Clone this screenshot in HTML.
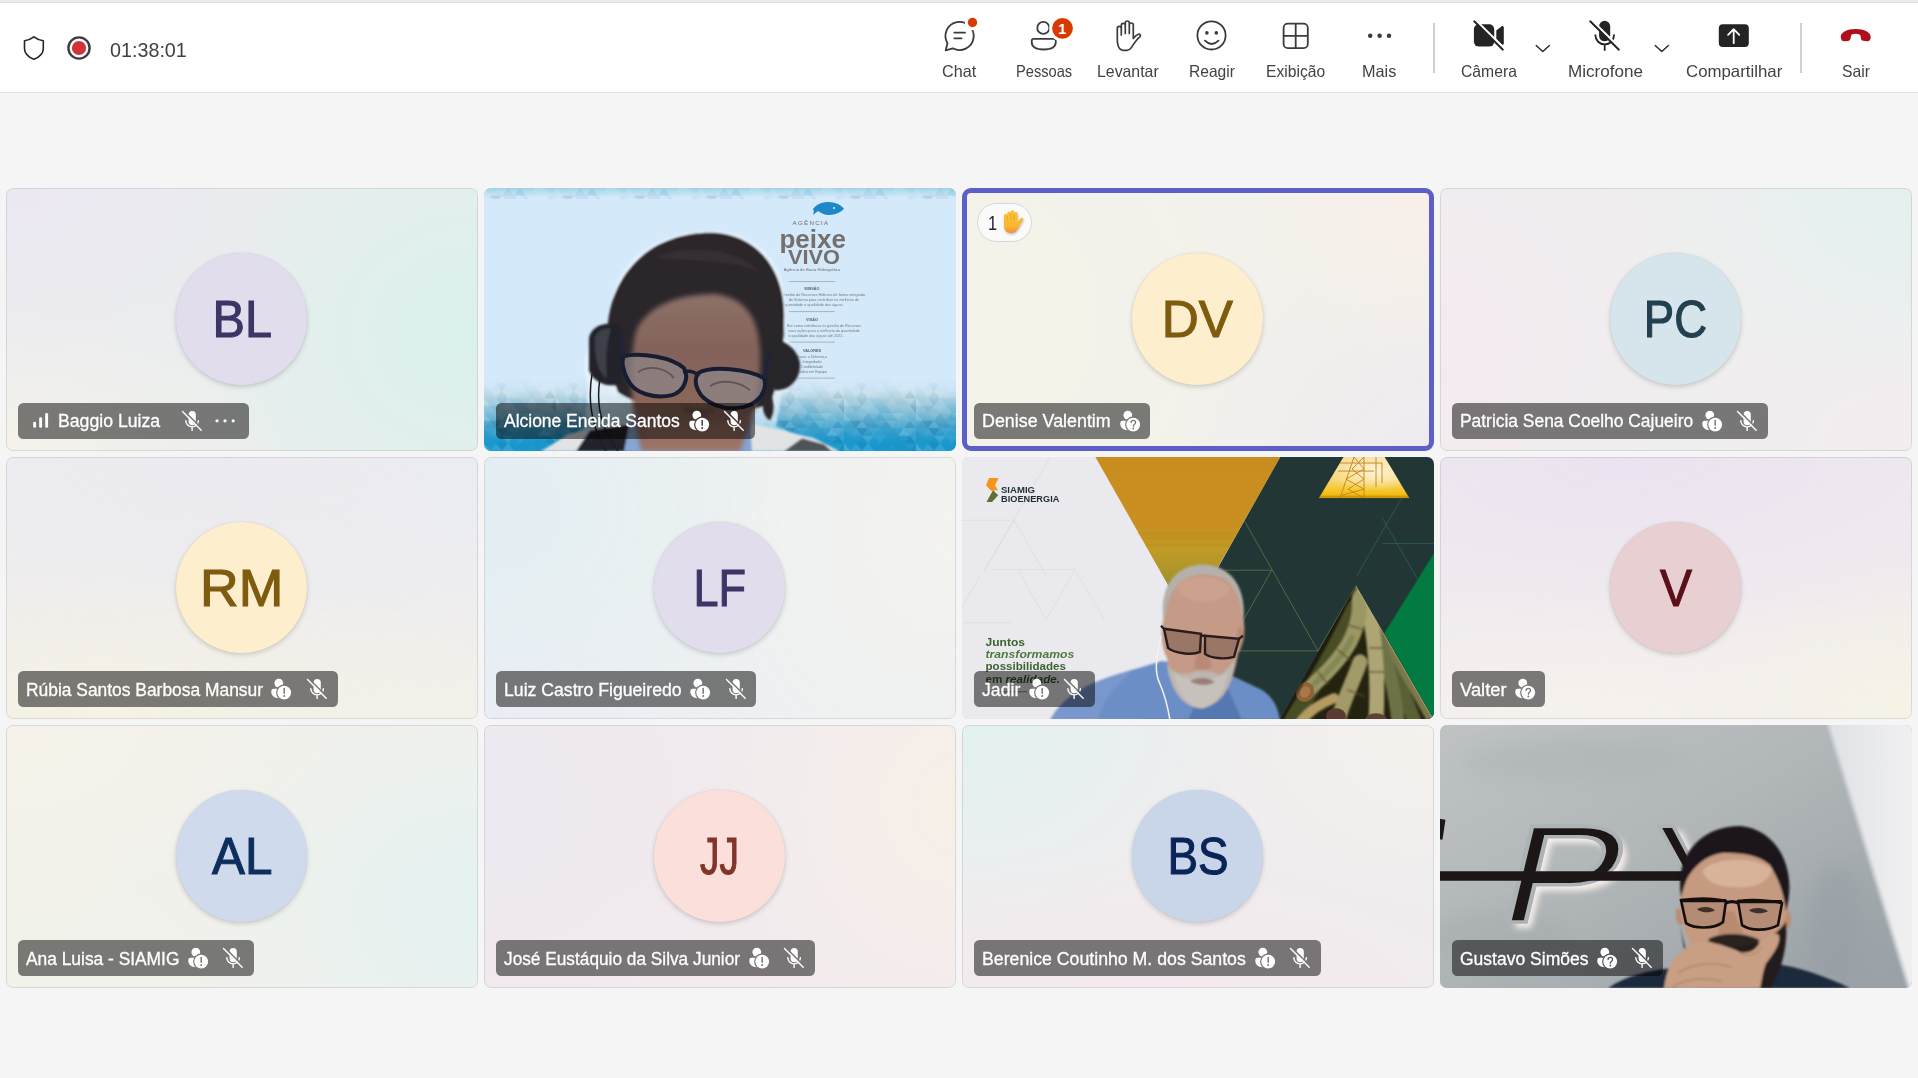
<!DOCTYPE html>
<html lang="pt-BR"><head><meta charset="utf-8"><title>Reunião</title>
<style>
*{box-sizing:border-box;margin:0;padding:0}
html,body{width:1918px;height:1078px;overflow:hidden;background:#f5f5f5;font-family:"Liberation Sans","DejaVu Sans",sans-serif}
body{position:relative}
.sx{position:absolute;white-space:nowrap;transform-origin:0 50%;display:block;line-height:1}
#strip{position:absolute;left:0;top:0;width:1918px;height:3px;background:#ebebeb;border-bottom:1px solid #dedede}
#bar{position:absolute;left:0;top:3px;width:1918px;height:90px;background:#fff;border-bottom:1px solid #e0e0e0}
#bar .lb{color:#424242;top:61.5px}
#bar svg{position:absolute;overflow:visible}
.dv{position:absolute;top:20px;height:50px;width:1.5px;background:#d1d1d1}
.tile{position:absolute;width:472px;border-radius:7px;overflow:hidden}
.tile .bd{position:absolute;left:0;top:0;right:0;bottom:0;border-radius:7px;border:1px solid rgba(120,120,130,.2);pointer-events:none}
.pic{position:absolute;left:0;top:0;display:block}
.av{position:absolute;left:50%;top:50%;width:131.4px;height:131.4px;margin:-66.2px 0 0 -66px;border-radius:50%;box-shadow:0 2px 5px rgba(0,0,0,.16),0 0 1px rgba(0,0,0,.12);text-align:center;line-height:133.2px;font-size:51px;letter-spacing:0px;-webkit-text-stroke:1.1px currentColor}
.np{position:absolute;height:36px;border-radius:5.5px;background:rgba(0,0,0,.5);color:#fff}
.np .sx{color:#fff;-webkit-text-stroke:.3px #fff}
.np svg{position:absolute;overflow:visible}

</style></head>
<body>
<div id="strip"></div><div id="bar"></div><svg style="position:absolute;left:0;top:0" width="1918" height="96" viewBox="0 0 1918 96"><path d="M33.9 36.9C31 39.1 27.6 40.4 24.5 40.8V48.4C24.5 53.4 28.4 57 33.9 59.3C39.4 57 43.3 53.4 43.3 48.4V40.8C40.2 40.4 36.8 39.1 33.9 36.9Z" fill="none" stroke="#242424" stroke-width="1.6" stroke-linejoin="round"/><circle cx="79" cy="48" r="10.6" fill="none" stroke="#3d3d3d" stroke-width="2.4"/><circle cx="79" cy="48" r="7.1" fill="#d13438"/><path d="M952.8 48.3L945.7 50.3L947.5 43.2A14.1 14.1 0 1 1 952.8 48.3Z" fill="none" stroke="#3b3b3b" stroke-width="1.8" stroke-linejoin="round"/><path d="M954.3 32.7H965M954.3 38.3H961.6" stroke="#3b3b3b" stroke-width="1.8" stroke-linecap="round"/><circle cx="972.5" cy="22.5" r="7.7" fill="#fff"/><circle cx="972.5" cy="22.5" r="4.7" fill="#d83b01"/><circle cx="1043.3" cy="27.9" r="6" fill="none" stroke="#3b3b3b" stroke-width="1.8"/><path d="M1034 38.8H1053.5A2.3 2.3 0 0 1 1055.8 41.1V42C1055.8 47 1050.8 49.5 1043.75 49.5S1031.7 47 1031.7 42V41.1A2.3 2.3 0 0 1 1034 38.8Z" fill="none" stroke="#3b3b3b" stroke-width="1.8"/><circle cx="1062.5" cy="28.3" r="13.3" fill="#fff"/><circle cx="1062.5" cy="28.3" r="10.4" fill="#d83b01"/><text x="1062.3" y="33.6" text-anchor="middle" font-family="Liberation Sans,sans-serif" font-weight="700" font-size="14.5" fill="#fff">1</text><path d="M1117.3 40V28.4a2 2 0 0 1 4 0V35M1121.3 35V25.4a2 2 0 0 1 4 0V33.5M1125.3 33.5V23a2 2 0 0 1 4 0V33.5M1129.3 33.5V25a2 2 0 0 1 4 0V38.6c1.4-2 3.4-3.8 5-4.4c1.6-.5 2.7.9 1.8 2.4c-3.8 3-6.300 7-8.8 11c-1 1.600-2.300 2.700-4.300 2.700h-3.600c-2.500 0-4.100-1.500-5.100-4C1117.700 44.500 1117.300 42.500 1117.300 40" fill="none" stroke="#3b3b3b" stroke-width="1.7" stroke-linecap="round" stroke-linejoin="round"/><circle cx="1211.5" cy="35.4" r="14.1" fill="none" stroke="#3b3b3b" stroke-width="1.8"/><circle cx="1206.9" cy="32.9" r="1.8" fill="#3b3b3b"/><circle cx="1216.3" cy="32.9" r="1.8" fill="#3b3b3b"/><path d="M1204.9 40.7Q1211.6 47.4 1218.5 40.7" fill="none" stroke="#3b3b3b" stroke-width="1.8" stroke-linecap="round"/><rect x="1283.6" y="23.6" width="24.2" height="24.5" rx="4.2" fill="none" stroke="#3b3b3b" stroke-width="1.8"/><path d="M1295.7 23.6V48.1M1283.6 35.8H1307.8" stroke="#3b3b3b" stroke-width="1.8"/><circle cx="1370.2" cy="35.7" r="2.25" fill="#3b3b3b"/><circle cx="1379.6" cy="35.7" r="2.25" fill="#3b3b3b"/><circle cx="1389" cy="35.7" r="2.25" fill="#3b3b3b"/><rect x="1473.9" y="24.3" width="20.3" height="22.3" rx="5" fill="#242424"/><path d="M1496.3 30.6V38.9L1501.6 44.4C1502.5 45.300 1503.8 44.7 1503.8 43.5V27.6C1503.8 26.3 1502.4 25.6 1501.4 26.4Z" fill="#242424"/><path d="M1475.000 19.500L1504.700 48.900" stroke="#fff" stroke-width="2.3"/><path d="M1474.200 21.300L1502.900 49.700" stroke="#242424" stroke-width="1.9" stroke-linecap="round"/><path d="M1536.2 45.600L1542.8 51.600L1549.3999999999999 45.600" fill="none" stroke="#242424" stroke-width="1.400" stroke-linecap="round" stroke-linejoin="round"/><path d="M1655.2 45.600L1661.8 51.600L1668.3999999999999 45.600" fill="none" stroke="#242424" stroke-width="1.400" stroke-linecap="round" stroke-linejoin="round"/><rect x="1599.1" y="20.8" width="11.1" height="20.5" rx="5.55" fill="#242424"/><path d="M1595.400 35.200A9.300 9.300 0 0 0 1614.000 35.200M1604.700 44.700V50" fill="none" stroke="#242424" stroke-width="1.800" stroke-linecap="round"/><path d="M1591.000 19.500L1620.700 48.900" stroke="#fff" stroke-width="2.3"/><path d="M1590.200 21.300L1618.900 49.700" stroke="#242424" stroke-width="1.9" stroke-linecap="round"/><rect x="1718.8" y="24.3" width="30" height="22.600" rx="4" fill="#242424"/><path d="M1733.700 43.200V29.400M1728.100 34.800L1733.700 29.100L1739.300 34.800" fill="none" stroke="#fff" stroke-width="1.800" stroke-linecap="round" stroke-linejoin="round"/><path d="M1855.7 29.100C1847 29.100 1840.600 32.600 1840.800 37C1840.900 39.400 1841.800 41.300 1844 41.300L1848.300 40.900C1849.600 40.800 1850.200 40 1850.500 38.600L1851.300 34.800C1854 33.400 1857.400 33.400 1860.300 34.900L1861 38.600C1861.300 40 1861.900 40.700 1863.200 40.800L1867.500 41.300C1869.700 41.300 1870.700 39.400 1870.700 37C1870.800 32.600 1864.400 29.100 1855.700 29.100Z" fill="#b10e1c"/></svg><div class="dv" style="left:1433px;top:23px"></div><div class="dv" style="left:1800px;top:23px"></div><span class="sx" style="left:110.23px;font-size:21px;font-weight:400;transform:scaleX(0.9396);top:39.2px;color:#424242">01:38:01</span><span class="sx" style="left:942.43px;font-size:16.5px;font-weight:400;transform:scaleX(0.9810);top:62.7px;color:#424242">Chat</span><span class="sx" style="left:1015.53px;font-size:16.5px;font-weight:400;transform:scaleX(0.8863);top:62.7px;color:#424242">Pessoas</span><span class="sx" style="left:1097.13px;font-size:16.5px;font-weight:400;transform:scaleX(0.9607);top:62.7px;color:#424242">Levantar</span><span class="sx" style="left:1188.73px;font-size:16.5px;font-weight:400;transform:scaleX(0.9442);top:62.7px;color:#424242">Reagir</span><span class="sx" style="left:1266.13px;font-size:16.5px;font-weight:400;transform:scaleX(0.9491);top:62.7px;color:#424242">Exibição</span><span class="sx" style="left:1362.33px;font-size:16.5px;font-weight:400;transform:scaleX(0.9843);top:62.7px;color:#424242">Mais</span><span class="sx" style="left:1460.93px;font-size:16.5px;font-weight:400;transform:scaleX(0.9525);top:62.7px;color:#424242">Câmera</span><span class="sx" style="left:1568.13px;font-size:16.5px;font-weight:400;transform:scaleX(1.0351);top:62.7px;color:#424242">Microfone</span><span class="sx" style="left:1686.13px;font-size:16.5px;font-weight:400;transform:scaleX(1.0195);top:62.7px;color:#424242">Compartilhar</span><span class="sx" style="left:1842.13px;font-size:16.5px;font-weight:400;transform:scaleX(0.9541);top:62.7px;color:#424242">Sair</span><svg width="0" height="0" style="position:absolute"><defs>
<mask id="mMic" maskUnits="userSpaceOnUse" x="-2" y="-2" width="26" height="26"><rect x="-2" y="-2" width="26" height="26" fill="#fff"/><path d="M1.7 -0.400L20.700 18.500" stroke="#000" stroke-width="1.500"/></mask>
<symbol id="micoff" viewBox="0 0 20 20" overflow="visible"><g mask="url(#mMic)"><rect x="6.600" y="0" width="7.200" height="14.200" rx="3.600" fill="#fff"/><path d="M3.800 9.600A6.300 6.300 0 0 0 16.400 9.600M10.100 15.900V19.400" fill="none" stroke="#fff" stroke-width="1.400" stroke-linecap="round"/></g><path d="M0.500 0.600L19.200 19.200" stroke="#fff" stroke-width="1.400" stroke-linecap="round"/></symbol>
<mask id="mPa" maskUnits="userSpaceOnUse" x="-2" y="-2" width="26" height="26"><rect x="-2" y="-2" width="26" height="26" fill="#fff"/><circle cx="13.200" cy="13.600" r="8.100" fill="#000"/></mask>
<mask id="mEx" maskUnits="userSpaceOnUse" x="0" y="0" width="24" height="24"><rect width="24" height="24" fill="#fff"/><path d="M13.200 9.500V14.300" stroke="#000" stroke-width="1.500" stroke-linecap="round"/><circle cx="13.200" cy="17" r="1" fill="#000"/></mask>
<mask id="mQu" maskUnits="userSpaceOnUse" x="0" y="0" width="24" height="24"><rect width="24" height="24" fill="#fff"/><path d="M11.100 11.600C11.100 10.200 12 9.400 13.300 9.400C14.600 9.400 15.500 10.200 15.500 11.400C15.500 13.200 13.300 13.300 13.300 15.300" fill="none" stroke="#000" stroke-width="1.300" stroke-linecap="round"/><circle cx="13.300" cy="17.500" r=".9" fill="#000"/></mask>
<symbol id="ppl" viewBox="0 0 22 20" overflow="visible"><g mask="url(#mPa)" fill="#fff"><circle cx="7.800" cy="4.100" r="4.400"/><path d="M2.600 9.800H13A2.300 2.300 0 0 1 15.300 12.100V12.800C15.300 17 11.900 19.200 7.800 19.200S0.300 17 0.300 12.800V12.100A2.300 2.300 0 0 1 2.600 9.800Z"/></g></symbol>
<symbol id="pplA" viewBox="0 0 22 20" overflow="visible"><use href="#ppl"/><circle cx="13.200" cy="13.600" r="6.900" fill="#fff" mask="url(#mEx)"/></symbol>
<symbol id="pplQ" viewBox="0 0 22 20" overflow="visible"><use href="#ppl"/><circle cx="13.200" cy="13.600" r="6.900" fill="#fff" mask="url(#mQu)"/></symbol>
</defs></svg><div class="tile" style="left:6px;top:188px;height:262.67px;background:radial-gradient(ellipse 75% 90% at 0% 0%, #ece8f2 0%, #ece8f200 100%),radial-gradient(ellipse 60% 70% at 0% 100%, #f5f2ea 0%, #f5f2ea00 100%),radial-gradient(ellipse 60% 90% at 100% 55%, #daf1eb 0%, #daf1eb00 100%),#e9eeee"><div class="bd"></div><div class="av" style="background:#e2dded;color:#3d3566"><span style="display:inline-block;transform:scaleX(0.9521)">BL</span></div><div class="np" style="left:12px;top:214.67px;width:231.20px"><span class="sx" style="left:39.76px;font-size:17.5px;font-weight:400;transform:scaleX(1.0090);top:10.60px">Baggio Luiza</span><svg style="left:164.00px;top:8px" width="20" height="20"><use href="#micoff"/></svg><svg style="left:0;top:0" width="231" height="36"><g fill="#fff"><rect x="15.200" y="18.700" width="2.900" height="6" rx="1.300"/><rect x="21.200" y="14.200" width="2.900" height="10.500" rx="1.300"/><rect x="27.200" y="10" width="2.900" height="14.700" rx="1.300"/><circle cx="199" cy="17.800" r="1.600"/><circle cx="207" cy="17.800" r="1.600"/><circle cx="215.200" cy="17.800" r="1.600"/></g></svg></div></div><div class="tile ph" style="left:484px;top:188px;height:262.67px;background:#ccc"><svg class="pic" width="472" height="263.200" viewBox="0 0 472 263" preserveAspectRatio="none">
<defs><pattern id="tp1" width="72" height="45.0" patternUnits="userSpaceOnUse"><path d="M-12 0.0h12l-6.0 7.5z" fill="#036" fill-opacity="0.1"/><path d="M-6.0 7.5h12l-6.0 -7.5z" fill="#fff" fill-opacity="0.18"/><path d="M0 0.0h12l-6.0 7.5z" fill="#8cf" fill-opacity="0"/><path d="M6.0 7.5h12l-6.0 -7.5z" fill="#036" fill-opacity="0"/><path d="M12 0.0h12l-6.0 7.5z" fill="#fff" fill-opacity="0.08"/><path d="M18.0 7.5h12l-6.0 -7.5z" fill="#036" fill-opacity="0.08"/><path d="M24 0.0h12l-6.0 7.5z" fill="#fff" fill-opacity="0"/><path d="M30.0 7.5h12l-6.0 -7.5z" fill="#08c" fill-opacity="0.18"/><path d="M36 0.0h12l-6.0 7.5z" fill="#036" fill-opacity="0"/><path d="M42.0 7.5h12l-6.0 -7.5z" fill="#8cf" fill-opacity="0"/><path d="M48 0.0h12l-6.0 7.5z" fill="#fff" fill-opacity="0.16"/><path d="M54.0 7.5h12l-6.0 -7.5z" fill="#fff" fill-opacity="0.08"/><path d="M60 0.0h12l-6.0 7.5z" fill="#8cf" fill-opacity="0.05"/><path d="M66.0 7.5h12l-6.0 -7.5z" fill="#8cf" fill-opacity="0"/><path d="M72 0.0h12l-6.0 7.5z" fill="#08c" fill-opacity="0.08"/><path d="M78.0 7.5h12l-6.0 -7.5z" fill="#036" fill-opacity="0"/><path d="M-6.0 7.5h12l-6.0 7.5z" fill="#8cf" fill-opacity="0"/><path d="M0.0 15.0h12l-6.0 -7.5z" fill="#036" fill-opacity="0.05"/><path d="M6.0 7.5h12l-6.0 7.5z" fill="#036" fill-opacity="0.16"/><path d="M12.0 15.0h12l-6.0 -7.5z" fill="#fff" fill-opacity="0.08"/><path d="M18.0 7.5h12l-6.0 7.5z" fill="#036" fill-opacity="0.08"/><path d="M24.0 15.0h12l-6.0 -7.5z" fill="#036" fill-opacity="0.08"/><path d="M30.0 7.5h12l-6.0 7.5z" fill="#8cf" fill-opacity="0"/><path d="M36.0 15.0h12l-6.0 -7.5z" fill="#036" fill-opacity="0.08"/><path d="M42.0 7.5h12l-6.0 7.5z" fill="#fff" fill-opacity="0.1"/><path d="M48.0 15.0h12l-6.0 -7.5z" fill="#fff" fill-opacity="0.08"/><path d="M54.0 7.5h12l-6.0 7.5z" fill="#fff" fill-opacity="0.08"/><path d="M60.0 15.0h12l-6.0 -7.5z" fill="#036" fill-opacity="0.08"/><path d="M66.0 7.5h12l-6.0 7.5z" fill="#8cf" fill-opacity="0.16"/><path d="M72.0 15.0h12l-6.0 -7.5z" fill="#036" fill-opacity="0.18"/><path d="M78.0 7.5h12l-6.0 7.5z" fill="#8cf" fill-opacity="0.16"/><path d="M84.0 15.0h12l-6.0 -7.5z" fill="#036" fill-opacity="0.18"/><path d="M-12 15.0h12l-6.0 7.5z" fill="#036" fill-opacity="0.1"/><path d="M-6.0 22.5h12l-6.0 -7.5z" fill="#036" fill-opacity="0.05"/><path d="M0 15.0h12l-6.0 7.5z" fill="#8cf" fill-opacity="0"/><path d="M6.0 22.5h12l-6.0 -7.5z" fill="#8cf" fill-opacity="0.12"/><path d="M12 15.0h12l-6.0 7.5z" fill="#036" fill-opacity="0.16"/><path d="M18.0 22.5h12l-6.0 -7.5z" fill="#08c" fill-opacity="0.04"/><path d="M24 15.0h12l-6.0 7.5z" fill="#8cf" fill-opacity="0.1"/><path d="M30.0 22.5h12l-6.0 -7.5z" fill="#fff" fill-opacity="0"/><path d="M36 15.0h12l-6.0 7.5z" fill="#08c" fill-opacity="0.08"/><path d="M42.0 22.5h12l-6.0 -7.5z" fill="#036" fill-opacity="0.05"/><path d="M48 15.0h12l-6.0 7.5z" fill="#08c" fill-opacity="0.05"/><path d="M54.0 22.5h12l-6.0 -7.5z" fill="#fff" fill-opacity="0.18"/><path d="M60 15.0h12l-6.0 7.5z" fill="#fff" fill-opacity="0.12"/><path d="M66.0 22.5h12l-6.0 -7.5z" fill="#8cf" fill-opacity="0.08"/><path d="M72 15.0h12l-6.0 7.5z" fill="#036" fill-opacity="0.1"/><path d="M78.0 22.5h12l-6.0 -7.5z" fill="#036" fill-opacity="0.04"/><path d="M-6.0 22.5h12l-6.0 7.5z" fill="#08c" fill-opacity="0.08"/><path d="M0.0 30.0h12l-6.0 -7.5z" fill="#08c" fill-opacity="0.08"/><path d="M6.0 22.5h12l-6.0 7.5z" fill="#fff" fill-opacity="0"/><path d="M12.0 30.0h12l-6.0 -7.5z" fill="#08c" fill-opacity="0.12"/><path d="M18.0 22.5h12l-6.0 7.5z" fill="#fff" fill-opacity="0.12"/><path d="M24.0 30.0h12l-6.0 -7.5z" fill="#036" fill-opacity="0"/><path d="M30.0 22.5h12l-6.0 7.5z" fill="#8cf" fill-opacity="0.12"/><path d="M36.0 30.0h12l-6.0 -7.5z" fill="#08c" fill-opacity="0.04"/><path d="M42.0 22.5h12l-6.0 7.5z" fill="#08c" fill-opacity="0.1"/><path d="M48.0 30.0h12l-6.0 -7.5z" fill="#036" fill-opacity="0.04"/><path d="M54.0 22.5h12l-6.0 7.5z" fill="#08c" fill-opacity="0"/><path d="M60.0 30.0h12l-6.0 -7.5z" fill="#036" fill-opacity="0.12"/><path d="M66.0 22.5h12l-6.0 7.5z" fill="#fff" fill-opacity="0.08"/><path d="M72.0 30.0h12l-6.0 -7.5z" fill="#fff" fill-opacity="0.18"/><path d="M78.0 22.5h12l-6.0 7.5z" fill="#036" fill-opacity="0.05"/><path d="M84.0 30.0h12l-6.0 -7.5z" fill="#036" fill-opacity="0.05"/><path d="M-12 30.0h12l-6.0 7.5z" fill="#08c" fill-opacity="0.16"/><path d="M-6.0 37.5h12l-6.0 -7.5z" fill="#fff" fill-opacity="0.18"/><path d="M0 30.0h12l-6.0 7.5z" fill="#08c" fill-opacity="0.05"/><path d="M6.0 37.5h12l-6.0 -7.5z" fill="#8cf" fill-opacity="0.18"/><path d="M12 30.0h12l-6.0 7.5z" fill="#036" fill-opacity="0.1"/><path d="M18.0 37.5h12l-6.0 -7.5z" fill="#8cf" fill-opacity="0.18"/><path d="M24 30.0h12l-6.0 7.5z" fill="#08c" fill-opacity="0.1"/><path d="M30.0 37.5h12l-6.0 -7.5z" fill="#08c" fill-opacity="0.12"/><path d="M36 30.0h12l-6.0 7.5z" fill="#036" fill-opacity="0.05"/><path d="M42.0 37.5h12l-6.0 -7.5z" fill="#036" fill-opacity="0"/><path d="M48 30.0h12l-6.0 7.5z" fill="#036" fill-opacity="0.05"/><path d="M54.0 37.5h12l-6.0 -7.5z" fill="#036" fill-opacity="0.04"/><path d="M60 30.0h12l-6.0 7.5z" fill="#08c" fill-opacity="0"/><path d="M66.0 37.5h12l-6.0 -7.5z" fill="#036" fill-opacity="0.08"/><path d="M72 30.0h12l-6.0 7.5z" fill="#036" fill-opacity="0.1"/><path d="M78.0 37.5h12l-6.0 -7.5z" fill="#036" fill-opacity="0"/><path d="M-6.0 37.5h12l-6.0 7.5z" fill="#8cf" fill-opacity="0.16"/><path d="M0.0 45.0h12l-6.0 -7.5z" fill="#8cf" fill-opacity="0.12"/><path d="M6.0 37.5h12l-6.0 7.5z" fill="#036" fill-opacity="0.08"/><path d="M12.0 45.0h12l-6.0 -7.5z" fill="#8cf" fill-opacity="0.05"/><path d="M18.0 37.5h12l-6.0 7.5z" fill="#fff" fill-opacity="0.08"/><path d="M24.0 45.0h12l-6.0 -7.5z" fill="#8cf" fill-opacity="0.18"/><path d="M30.0 37.5h12l-6.0 7.5z" fill="#08c" fill-opacity="0.16"/><path d="M36.0 45.0h12l-6.0 -7.5z" fill="#08c" fill-opacity="0.18"/><path d="M42.0 37.5h12l-6.0 7.5z" fill="#08c" fill-opacity="0"/><path d="M48.0 45.0h12l-6.0 -7.5z" fill="#08c" fill-opacity="0.04"/><path d="M54.0 37.5h12l-6.0 7.5z" fill="#036" fill-opacity="0"/><path d="M60.0 45.0h12l-6.0 -7.5z" fill="#036" fill-opacity="0"/><path d="M66.0 37.5h12l-6.0 7.5z" fill="#036" fill-opacity="0.16"/><path d="M72.0 45.0h12l-6.0 -7.5z" fill="#036" fill-opacity="0"/><path d="M78.0 37.5h12l-6.0 7.5z" fill="#fff" fill-opacity="0.08"/><path d="M84.0 45.0h12l-6.0 -7.5z" fill="#fff" fill-opacity="0"/></pattern>
<linearGradient id="p1bot" x1="0" y1="0" x2="0" y2="1"><stop offset=".12" stop-color="#cfe3ee" stop-opacity="0"/><stop offset=".27" stop-color="#c5dde8"/><stop offset=".47" stop-color="#8fc3d8"/><stop offset=".66" stop-color="#4aa7cf"/><stop offset=".86" stop-color="#1f99cc"/><stop offset="1" stop-color="#1b9ad0"/></linearGradient>
<linearGradient id="p1top" x1="0" y1="0" x2="0" y2="1"><stop offset="0" stop-color="#8fcbe0"/><stop offset=".55" stop-color="#b5dcec" stop-opacity=".7"/><stop offset="1" stop-color="#d4e9fa" stop-opacity="0"/></linearGradient>
<linearGradient id="p1face" x1="0" y1="0" x2="0" y2="1"><stop offset="0" stop-color="#8d7169"/><stop offset=".35" stop-color="#84635b"/><stop offset=".7" stop-color="#8b6659"/><stop offset="1" stop-color="#986e62"/></linearGradient>
<linearGradient id="p1fg" x1="0" y1="0" x2="0" y2="1"><stop offset="0" stop-color="#000"/><stop offset=".3" stop-color="#fff"/></linearGradient><mask id="p1fm" maskUnits="userSpaceOnUse" x="0" y="190" width="472" height="73"><rect y="190" width="472" height="73" fill="url(#p1fg)"/></mask><filter id="b1" x="-10%" y="-10%" width="120%" height="120%"><feGaussianBlur stdDeviation="1.1"/></filter>
<filter id="b2" x="-10%" y="-10%" width="120%" height="120%"><feGaussianBlur stdDeviation="2.5"/></filter>
<filter id="b05"><feGaussianBlur stdDeviation=".5"/></filter>
</defs>
<rect width="472" height="263" fill="#d4e9fa"/>
<rect width="472" height="12" fill="url(#p1top)" opacity=".8"/><rect width="472" height="11" fill="url(#tp1)" opacity=".7"/>
<rect y="186" width="472" height="77" fill="url(#p1bot)"/><rect y="190" width="472" height="73" fill="url(#tp1)" mask="url(#p1fm)"/>
<!-- logo -->
<g filter="url(#b05)">
<path d="M329 21c5-7 16-9 25-5c3 1.500 5 3.500 6 5c-3 3-9 6-15 6c-5 0-8-2-11-4l-5 4c1-3 1-5 0-6zM350 19a1 1 0 1 0 .1 0z" fill="#1e88c9"/>
<text x="327" y="36.500" font-family="Liberation Sans,sans-serif" font-size="6.200" letter-spacing="1.300" fill="#6f6c6a" text-anchor="middle">AGÊNCIA</text>
<text x="295.500" y="59.500" font-family="Liberation Sans,sans-serif" font-weight="700" font-size="25.500" fill="#74706d" textLength="66.500" lengthAdjust="spacingAndGlyphs">peixe</text>
<text x="304" y="75.500" font-family="Liberation Sans,sans-serif" font-weight="700" font-size="21" fill="#74706d" textLength="52" lengthAdjust="spacingAndGlyphs">VIVO</text>
<text x="328" y="83" font-family="Liberation Sans,sans-serif" font-size="4.200" fill="#6f6c6a" text-anchor="middle">Agência de Bacia Hidrográfica</text>
<g stroke="#8a8f94" stroke-width=".6"><path d="M305 93.500h46M305 123.500h46M305 154h46M305 190h46"/></g>
<g font-family="Liberation Sans,sans-serif" font-size="3.800" fill="#777c82" text-anchor="middle">
<text x="328" y="102" font-weight="700" fill="#5d6268">MISSÃO</text>
<text x="340" y="108">Gestão de Recursos Hídricos de forma integrada</text><text x="340" y="113">do Sistema para contribuir na melhoria de</text><text x="330" y="118">quantidade e qualidade das águas.</text>
<text x="328" y="133" font-weight="700" fill="#5d6268">VISÃO</text>
<text x="340" y="139">Ser como referência na gestão de Recursos</text><text x="340" y="144">suas ações para a melhoria da quantidade</text><text x="332" y="149">e qualidade das águas até 2021.</text>
<text x="328" y="164" font-weight="700" fill="#5d6268">VALORES</text>
<text x="328" y="170">Fazer a Diferença</text><text x="328" y="175">Integridade</text><text x="328" y="180">Credibilidade</text><text x="326" y="185">Trabalho em Equipe</text>
</g></g>
<!-- person -->
<g filter="url(#b1)">
<!-- white halo -->
<path d="M132 140C116 96 152 42 230 43C292 46 310 100 299 150C322 158 320 200 298 204L292 238L356 263H56L100 240L104 196C96 180 100 144 132 140Z" fill="#f2f8fd" opacity=".6"/>
<!-- shirt / shoulders -->
<path d="M58 263L84 246L142 234L270 236L330 250L356 263Z" fill="#e2e3e5"/>
<path d="M92 263L106 242L146 236L152 263Z" fill="#20232b"/>
<path d="M300 263L318 250L340 256L348 263Z" fill="#2a2d36" opacity=".8"/>
<path d="M140 263L146 232H266L268 263Z" fill="#86a6d4"/>
<!-- hair -->
<path d="M134 204C118 162 118 112 148 78C170 52 204 43 234 45C280 50 302 90 300 132C300 162 296 192 286 216C262 228 168 228 134 204Z" fill="#2a262c"/>
<path d="M170 70C200 56 250 58 276 84C250 72 200 72 170 70Z" fill="#3c3338" opacity=".7"/>
</g>
<g filter="url(#b2)">
<!-- face -->
<path d="M151 146C160 120 190 106 232 106C260 110 272 128 275 152C280 188 270 230 256 263H158C148 232 144 186 151 146Z" fill="url(#p1face)"/>
<path d="M158 226C190 240 236 240 266 226L256 263H160Z" fill="#9b7266" opacity=".9"/>
<path d="M196 214C206 222 222 224 232 218C226 232 204 232 196 214Z" fill="#5e4038" opacity=".6"/>
</g>
<g filter="url(#b1)">
<!-- ear cups -->
<path d="M105 150C107 138 121 133 134 137C142 146 142 184 136 196C124 200 109 194 105 182Z" fill="#24242b"/>
<path d="M281 152C296 149 313 158 316 175C317 191 306 203 291 202C283 196 279 168 281 152Z" fill="#25252c"/>
<path d="M111 150C113 142 121 139 127 141C123 152 121 170 123 190C115 186 110 170 111 150Z" fill="#4a4b55" opacity=".7"/>
<path d="M284 204C290 210 292 222 286 232C278 228 276 214 284 204Z" fill="#2a262c"/>
</g>
<!-- mic boom + cable -->
<path d="M108 186C104 210 106 236 122 263M116 190C112 215 116 240 134 263" fill="none" stroke="#1d1d24" stroke-width="1.500"/>
<!-- glasses -->
<g filter="url(#b05)">
<path d="M140 168C156 164 188 169 200 180C205 189 201 203 188 207C170 211 150 205 144 192C139 183 137 173 140 168Z" fill="#8d8284" fill-opacity=".8" stroke="#191e33" stroke-width="4"/>
<path d="M214 185C228 177 264 181 280 190C284 201 276 215 259 219C240 223 220 215 214 202C211 196 211 190 214 185Z" fill="#8d8284" fill-opacity=".8" stroke="#191e33" stroke-width="4"/>
<path d="M199 184C205 182 210 183 215 188" fill="none" stroke="#191e33" stroke-width="3.500"/>
<path d="M140 169L136 150M280 190L285 165" stroke="#1d2440" stroke-width="3"/>
<path d="M154 184C166 176 182 180 190 190M226 198C238 190 256 194 266 202" fill="none" stroke="#5a4a4c" stroke-width="1.800" opacity=".8"/>
</g>
</svg><div class="np" style="left:12px;top:214.67px;width:259.20px"><span class="sx" style="left:8.16px;font-size:17.5px;font-weight:400;transform:scaleX(0.9978);top:10.60px">Alcione Eneida Santos</span><svg style="left:192.80px;top:8px" width="22" height="20"><use href="#pplA"/></svg><svg style="left:228.30px;top:8px" width="20" height="20"><use href="#micoff"/></svg></div></div><div class="tile" style="left:962px;top:188px;height:262.67px;background:radial-gradient(ellipse 60% 110% at 0% 50%, #f5f4e9 0%, #f5f4e900 100%),radial-gradient(ellipse 45% 70% at 100% 0%, #f9efe9 0%, #f9efe900 100%),radial-gradient(ellipse 55% 80% at 100% 100%, #efeaf0 0%, #efeaf000 100%),#f2f1eb"><div class="bd" style="border:5px solid #5b5fc7;border-radius:9px"></div><div class="av" style="background:#fdeecd;color:#7f5b0f"><span style="display:inline-block;transform:scaleX(1.0047)">DV</span></div><div class="np" style="left:12px;top:214.67px;width:175.90px"><span class="sx" style="left:8.26px;font-size:17.5px;font-weight:400;transform:scaleX(1.0205);top:10.60px">Denise Valentim</span><svg style="left:145.70px;top:8px" width="22" height="20"><use href="#pplQ"/></svg></div><div style="position:absolute;left:15px;top:15px;width:55px;height:39px;border-radius:20px;background:#fafafa;border:1px solid #d6d6d6"></div>
<span class="sx" style="left:25.600px;top:25.400px;font-size:20.500px;color:#242424;transform:scaleX(.8)">1</span>
<svg style="position:absolute;left:39.300px;top:21.300px;overflow:visible" width="22" height="26" viewBox="0 0 22 26"><defs><linearGradient id="hg" x1="0" y1="0" x2="0" y2="1"><stop offset="0" stop-color="#fcc233"/><stop offset=".7" stop-color="#fbb62f"/><stop offset="1" stop-color="#f7894a"/></linearGradient><filter id="hs" x="-30%" y="-30%" width="160%" height="160%"><feGaussianBlur stdDeviation="1.200"/></filter></defs>
<path d="M3 12V6.500a1.700 1.700 0 0 1 3.400 0V4.200a1.700 1.700 0 0 1 3.400 0V3a1.700 1.700 0 0 1 3.400 0V4.800a1.700 1.700 0 0 1 3.400 0V13c1-1.800 2.600-3.600 4-4.200c1.400-.3 2.200 1 1.400 2.200c-2.400 3.500-3.600 7.500-6.500 10.800c-1.200 1.400-3 2.300-5.400 2.300c-4.500 0-7.100-3-7.100-7.600z" fill="#000" opacity=".22" filter="url(#hs)" transform="translate(.5 1.500)"/>
<path d="M3 12V6.500a1.700 1.700 0 0 1 3.400 0V4.200a1.700 1.700 0 0 1 3.400 0V3a1.700 1.700 0 0 1 3.400 0V4.800a1.700 1.700 0 0 1 3.400 0V13c1-1.800 2.600-3.600 4-4.200c1.400-.3 2.200 1 1.400 2.200c-2.400 3.500-3.600 7.500-6.500 10.800c-1.200 1.400-3 2.300-5.400 2.300c-4.500 0-7.100-3-7.100-7.600z" fill="url(#hg)"/>
<path d="M6.400 6.500V11M9.800 4.500V10.500M13.200 5V11" stroke="#e79a1f" stroke-width=".8" fill="none" opacity=".8"/></svg></div><div class="tile" style="left:1440px;top:188px;height:262.67px;background:radial-gradient(ellipse 55% 100% at 0% 60%, #f4eaef 0%, #f4eaef00 100%),radial-gradient(ellipse 55% 80% at 100% 0%, #e3f1ee 0%, #e3f1ee00 100%),radial-gradient(ellipse 50% 60% at 100% 100%, #f4ecee 0%, #f4ecee00 100%),#efeeef"><div class="bd"></div><div class="av" style="background:#d6e4eb;color:#22404e"><span style="display:inline-block;transform:scaleX(0.8913)">PC</span></div><div class="np" style="left:12px;top:214.67px;width:315.80px"><span class="sx" style="left:8.26px;font-size:17.5px;font-weight:400;transform:scaleX(0.9943);top:10.60px">Patricia Sena Coelho Cajueiro</span><svg style="left:249.60px;top:8px" width="22" height="20"><use href="#pplA"/></svg><svg style="left:284.90px;top:8px" width="20" height="20"><use href="#micoff"/></svg></div></div><div class="tile" style="left:6px;top:456.67px;height:262.67px;background:radial-gradient(ellipse 90% 60% at 50% 0%, #ebeaf0 0%, #ebeaf000 100%),radial-gradient(ellipse 40% 60% at 100% 0%, #eaeef6 0%, #eaeef600 100%),radial-gradient(ellipse 90% 60% at 20% 100%, #f6f2e4 0%, #f6f2e400 100%),radial-gradient(ellipse 60% 50% at 100% 100%, #f3f1ea 0%, #f3f1ea00 100%),#eeedee"><div class="bd"></div><div class="av" style="background:#fdeecd;color:#7f5b0f"><span style="display:inline-block;transform:scaleX(1.0511)">RM</span></div><div class="np" style="left:12px;top:214.67px;width:319.90px"><span class="sx" style="left:8.16px;font-size:17.5px;font-weight:400;transform:scaleX(0.9945);top:10.40px">Rúbia Santos Barbosa Mansur</span><svg style="left:253.40px;top:8px" width="22" height="20"><use href="#pplA"/></svg><svg style="left:289.00px;top:8px" width="20" height="20"><use href="#micoff"/></svg></div></div><div class="tile" style="left:484px;top:456.67px;height:262.67px;background:radial-gradient(ellipse 60% 90% at 0% 20%, #e2eef3 0%, #e2eef300 100%),radial-gradient(ellipse 60% 60% at 0% 100%, #eaecf5 0%, #eaecf500 100%),radial-gradient(ellipse 50% 100% at 100% 30%, #f4f3ef 0%, #f4f3ef00 100%),#edf1f1"><div class="bd"></div><div class="av" style="background:#e2dded;color:#3d3566"><span style="display:inline-block;transform:scaleX(0.8814)">LF</span></div><div class="np" style="left:12px;top:214.67px;width:259.80px"><span class="sx" style="left:8.06px;font-size:17.5px;font-weight:400;transform:scaleX(1.0088);top:10.40px">Luiz Castro Figueiredo</span><svg style="left:193.90px;top:8px" width="22" height="20"><use href="#pplA"/></svg><svg style="left:229.50px;top:8px" width="20" height="20"><use href="#micoff"/></svg></div></div><div class="tile ph" style="left:962px;top:456.67px;height:262.67px;background:#ccc"><svg class="pic" width="472" height="263.200" viewBox="0 0 472 262" preserveAspectRatio="none">
<defs>
<linearGradient id="p2or" x1="0" y1="0" x2="0" y2="1"><stop offset="0" stop-color="#c98d1f"/><stop offset=".42" stop-color="#c98f20"/><stop offset=".56" stop-color="#c39a25"/><stop offset=".72" stop-color="#a8952b"/><stop offset=".88" stop-color="#7d8a33"/><stop offset="1" stop-color="#66802f"/></linearGradient>
<linearGradient id="p2ye" x1="0" y1="0" x2="0" y2="1"><stop offset="0" stop-color="#f6dca0"/><stop offset=".55" stop-color="#f8d774"/><stop offset=".85" stop-color="#f4c21a"/><stop offset="1" stop-color="#e0a80e"/></linearGradient>
<radialGradient id="p2sky" cx=".62" cy=".35" r=".45"><stop offset="0" stop-color="#fff6dc" stop-opacity=".95"/><stop offset="1" stop-color="#fff6dc" stop-opacity="0"/></radialGradient>
<linearGradient id="p2cane" x1="0" y1="0" x2="1" y2="1"><stop offset="0" stop-color="#7d8a52"/><stop offset=".5" stop-color="#a89663"/><stop offset="1" stop-color="#5f4a2c"/></linearGradient>
<clipPath id="p2cc"><path d="M394 128L472 262H318Z"/></clipPath>
<clipPath id="p2yc"><path d="M381.500 0H422.600L447.400 41H356.800Z"/></clipPath>
<filter id="c1" x="-10%" y="-10%" width="120%" height="120%"><feGaussianBlur stdDeviation="1"/></filter>
<filter id="c05"><feGaussianBlur stdDeviation=".45"/></filter>
<filter id="c2" x="-10%" y="-10%" width="120%" height="120%"><feGaussianBlur stdDeviation="2"/></filter>
</defs>
<rect width="472" height="262" fill="#eae9ee"/>
<g stroke="#d9d8de" stroke-width=".7" fill="none" opacity=".9"><path d="M88 0L22 114M0 63H52L84 118M52 63L22 114M28 112H113L84 162L56 112M0 150L18 118M0 165H50M113 112L142 162"/></g>
<!-- dark green -->
<path d="M318 0H472V262H180L255 112Z" fill="#223735"/>
<!-- orange -->
<path d="M133.400 0H318.400L226 162.500Z" fill="url(#p2or)"/>
<g filter="url(#c1)" opacity=".5"><path d="M176 76H276M180 81H272M184 88H268" stroke="#a98a22" stroke-width="1.500"/></g>
<!-- thin olive lines -->
<g stroke="#6f8450" stroke-width=".7" fill="none"><path d="M283 64.500L356 193H232M263 112.700H309.700L264 193M356 193L394 128" opacity=".9"/><path d="M420 60L472 150M440 40L395 118M420 86H472" stroke="#2c5448" stroke-width="1"/></g>
<!-- yellow tower triangle -->
<g clip-path="url(#p2yc)"><rect x="350" width="100" height="42" fill="url(#p2ye)"/><rect x="350" width="100" height="42" fill="url(#p2sky)"/>
<g stroke="#c2841c" stroke-width=".9" fill="none" filter="url(#c05)"><path d="M392 0L378 41M402 0L402 41M392 0L402 12L384 22L402 32L380 38M402 0L390 12L402 22L386 32L402 41M372 6H420M376 14H412M414 0V30M420 6V26"/></g>
<rect x="350" y="38.500" width="100" height="3" fill="#b8860b" opacity=".6"/></g>
<!-- bright green -->
<path d="M472 95.500L422 176L472 262Z" fill="#037a41"/>
<path d="M472 95.500L422 176L472 262" fill="none" stroke="#0a5a33" stroke-width="1" opacity=".5"/>
<!-- sugar cane -->
<g clip-path="url(#p2cc)"><rect x="300" y="120" width="180" height="150" fill="#24230f"/>
<g filter="url(#c1)" fill="none" stroke-linecap="round">
<path d="M330 262C350 230 372 196 392 150" stroke="#4a4d28" stroke-width="16"/>
<path d="M452 262C440 230 422 190 404 150" stroke="#5a5f36" stroke-width="14"/>
<path d="M470 262C456 236 440 210 424 180" stroke="#7c7a4e" stroke-width="10"/>
<path d="M436 262C432 230 426 200 408 160" stroke="#6d7346" stroke-width="13"/>
<path d="M414 262C416 230 414 196 410 168C408 154 402 142 397 134" stroke="#aea574" stroke-width="15"/>
<path d="M376 262C382 240 392 222 398 204" stroke="#a39a69" stroke-width="15"/>
<path d="M343 234C360 220 378 202 388 184C396 168 400 150 396 134" stroke="#9b9865" stroke-width="15"/>
<path d="M352 226C368 212 382 196 390 180" stroke="#78834f" stroke-width="6" opacity=".7"/>
<path d="M340 262C350 250 362 244 372 240" stroke="#b39b62" stroke-width="10"/>
<g stroke="#5b4a2a" stroke-width="1.600" opacity=".8"><path d="M356 214L366 226M376 192L388 202M388 168L402 172M406 214H422M408 190H420M386 232L402 238"/></g>
</g>
<g filter="url(#c05)"><ellipse cx="343" cy="234" rx="9" ry="10" fill="#8f6238" transform="rotate(30 343 234)"/><ellipse cx="343" cy="234" rx="5" ry="6" fill="#a87848" transform="rotate(30 343 234)"/><ellipse cx="374" cy="258" rx="10" ry="8" fill="#5b3b30"/><ellipse cx="414" cy="262" rx="11" ry="7" fill="#5e4034"/></g>
<path d="M318 262L394 128" stroke="#1b180b" stroke-width="4" opacity=".7" filter="url(#c1)"/>
<path d="M472 262L394 128" stroke="#c9b07a" stroke-width="1.500" opacity=".7"/>
</g>
<!-- logo -->
<g filter="url(#c05)">
<path d="M27 21H36.600L33 28L36 33L29 33.500L24 28Z" fill="#f7941d"/><path d="M31 33L36.200 38L30 44.700H24.500L31 33Z" fill="#5f6f34"/>
<text x="39" y="36" font-family="Liberation Sans,sans-serif" font-weight="700" font-size="8.600" fill="#1f2d33" textLength="34" lengthAdjust="spacingAndGlyphs">SIAMIG</text>
<text x="39" y="44.700" font-family="Liberation Sans,sans-serif" font-weight="700" font-size="8.600" fill="#1f2d33" textLength="58.400" lengthAdjust="spacingAndGlyphs">BIOENERGIA</text>
<g font-family="Liberation Sans,sans-serif" font-weight="700" font-size="11.300">
<text x="23.500" y="187.800" fill="#3d6430" textLength="39.500" lengthAdjust="spacingAndGlyphs">Juntos</text>
<text x="23.500" y="200.200" fill="#4f7a3c" font-style="italic" textLength="88.800" lengthAdjust="spacingAndGlyphs">transformamos</text>
<text x="23.500" y="212.500" fill="#3d6430" textLength="80.500" lengthAdjust="spacingAndGlyphs">possibilidades</text>
<text x="23.500" y="224.700" fill="#3d6430" textLength="74.500" lengthAdjust="spacingAndGlyphs">em <tspan font-style="italic" fill="#2f5526">realidade.</tspan></text>
</g>
<rect x="23.500" y="233" width="42" height="1.200" fill="#4f7a3c" opacity=".6"/>
</g>
<!-- person -->
<g filter="url(#c1)">
<path d="M88 262C100 240 120 228 150 218L200 203L262 214L300 232C312 240 316 250 318 262Z" fill="#6c8ec6"/>
<path d="M88 262C100 240 120 228 150 218L172 211C150 230 140 245 136 262Z" fill="#7d9bd0" opacity=".7"/>
<path d="M226 262L236 240L264 226L280 262Z" fill="#5273ad" opacity=".8"/>
<!-- head -->
<path d="M202 160C198 128 214 108 241 108C268 108 284 128 281 160C284 172 282 186 276 196C272 222 262 246 240 250C220 250 208 226 205 200C199 190 198 172 202 160Z" fill="#c59a86"/>
<path d="M214 128C226 116 256 116 268 130C262 150 222 150 214 128Z" fill="#cfa591" opacity=".7"/>
<!-- hair fringe -->
<path d="M202 166C196 132 212 107 241 107C269 107 286 132 281 166C280 148 276 132 264 122C248 114 230 116 218 124C206 136 204 152 202 166Z" fill="#b5b0ab"/>
<!-- beard -->
<path d="M205 206C212 216 222 218 232 214C240 211 250 213 258 217C264 212 270 206 273 200C271 228 260 246 240 250C220 250 208 230 205 206Z" fill="#bdb6b0"/>
<path d="M212 214C222 224 250 226 266 214C262 236 252 248 240 250C224 248 214 232 212 214Z" fill="#c9c4be" opacity=".8"/>
<path d="M228 223C236 219 246 219 253 224C247 228 235 228 228 223Z" fill="#9a7f74"/>
<path d="M237 186C235 198 231 206 233 210C239 214 246 212 250 208C246 200 245 192 243 186Z" fill="#b58672" opacity=".8"/>
<path d="M276 170C280 168 283 174 281 184C279 190 276 192 275 190Z" fill="#b88a76"/>
</g>
<!-- glasses -->
<g filter="url(#c05)" fill="none" stroke="#2a1f1d" stroke-width="2.400">
<path d="M202 171L239 176L238 194C230 198 212 195 206 190Z" fill="#6e5248" fill-opacity=".5"/>
<path d="M243 178L277 181L272 199C262 202 248 200 243 196Z" fill="#6e5248" fill-opacity=".5"/>
<path d="M239 178H243M202 171L199 168M277 181L281 178"/>
</g>
<path d="M199 178C194 200 192 214 198 226C204 240 206 250 208 262" fill="none" stroke="#f2f2f2" stroke-width="1.500" filter="url(#c05)"/>
</svg><div class="np" style="left:12px;top:214.67px;width:120.80px"><span class="sx" style="left:7.76px;font-size:17.5px;font-weight:400;transform:scaleX(1.0099);top:10.40px">Jadir</span><svg style="left:54.80px;top:8px" width="22" height="20"><use href="#pplA"/></svg><svg style="left:90.40px;top:8px" width="20" height="20"><use href="#micoff"/></svg></div></div><div class="tile" style="left:1440px;top:456.67px;height:262.67px;background:radial-gradient(ellipse 100% 70% at 40% 0%, #ebe3f0 0%, #ebe3f000 100%),radial-gradient(ellipse 90% 55% at 30% 100%, #f6f2ec 0%, #f6f2ec00 100%),radial-gradient(ellipse 50% 60% at 100% 100%, #f6f4e3 0%, #f6f4e300 100%),#f0ebef"><div class="bd"></div><div class="av" style="background:#e8cfd2;color:#5a1019"><span style="display:inline-block;transform:scaleX(0.9403)">V</span></div><div class="np" style="left:12px;top:214.67px;width:92.80px"><span class="sx" style="left:7.76px;font-size:17.5px;font-weight:400;transform:scaleX(1.0493);top:10.40px">Valter</span><svg style="left:62.90px;top:8px" width="22" height="20"><use href="#pplQ"/></svg></div></div><div class="tile" style="left:6px;top:725.33px;height:262.67px;background:radial-gradient(ellipse 70% 80% at 0% 0%, #f6f2e9 0%, #f6f2e900 100%),radial-gradient(ellipse 55% 80% at 100% 70%, #e4f2f1 0%, #e4f2f100 100%),radial-gradient(ellipse 50% 60% at 0% 100%, #f1f2e8 0%, #f1f2e800 100%),#f0f1ec"><div class="bd"></div><div class="av" style="background:#cfdbec;color:#0e2f5e"><span style="display:inline-block;transform:scaleX(0.9682)">AL</span></div><div class="np" style="left:12px;top:214.67px;width:235.80px"><span class="sx" style="left:8.16px;font-size:17.5px;font-weight:400;transform:scaleX(0.9920);top:10.75px">Ana Luisa - SIAMIG</span><svg style="left:169.50px;top:8px" width="22" height="20"><use href="#pplA"/></svg><svg style="left:205.40px;top:8px" width="20" height="20"><use href="#micoff"/></svg></div></div><div class="tile" style="left:484px;top:725.33px;height:262.67px;background:radial-gradient(ellipse 60% 100% at 0% 30%, #eee8f1 0%, #eee8f100 100%),radial-gradient(ellipse 50% 100% at 100% 30%, #f7f0e8 0%, #f7f0e800 100%),radial-gradient(ellipse 60% 50% at 60% 100%, #f3ebee 0%, #f3ebee00 100%),#f1ebee"><div class="bd"></div><div class="av" style="background:#fbdfda;color:#80352a"><span style="display:inline-block;transform:scaleX(0.7628)">JJ</span></div><div class="np" style="left:12px;top:214.67px;width:318.80px"><span class="sx" style="left:8.06px;font-size:17.5px;font-weight:400;transform:scaleX(0.9862);top:10.75px">José Eustáquio da Silva Junior</span><svg style="left:252.80px;top:8px" width="22" height="20"><use href="#pplA"/></svg><svg style="left:288.40px;top:8px" width="20" height="20"><use href="#micoff"/></svg></div></div><div class="tile" style="left:962px;top:725.33px;height:262.67px;background:radial-gradient(ellipse 60% 80% at 0% 0%, #e2f1f0 0%, #e2f1f000 100%),radial-gradient(ellipse 50% 70% at 100% 0%, #f5f1ec 0%, #f5f1ec00 100%),radial-gradient(ellipse 90% 55% at 40% 100%, #f4e9ee 0%, #f4e9ee00 100%),#efedee"><div class="bd"></div><div class="av" style="background:#c9d6ea;color:#0a2458"><span style="display:inline-block;transform:scaleX(0.8972)">BS</span></div><div class="np" style="left:12px;top:214.67px;width:346.80px"><span class="sx" style="left:8.26px;font-size:17.5px;font-weight:400;transform:scaleX(1.0119);top:10.75px">Berenice Coutinho M. dos Santos</span><svg style="left:280.80px;top:8px" width="22" height="20"><use href="#pplA"/></svg><svg style="left:316.40px;top:8px" width="20" height="20"><use href="#micoff"/></svg></div></div><div class="tile ph" style="left:1440px;top:725.33px;height:262.67px;background:#ccc"><svg class="pic" width="472" height="263.200" viewBox="0 0 472 263" preserveAspectRatio="none">
<defs>
<linearGradient id="p3w" x1="0" y1="0" x2="1" y2="1"><stop offset="0" stop-color="#bfc3c4"/><stop offset=".45" stop-color="#b1b6b8"/><stop offset=".8" stop-color="#a0a7ab"/><stop offset="1" stop-color="#98a0a6"/></linearGradient>
<linearGradient id="p3r" x1="0" y1="0" x2="1" y2="0"><stop offset="0" stop-color="#dfe1e4"/><stop offset="1" stop-color="#f0f0f2"/></linearGradient>
<clipPath id="p3yc"><rect x="-10" y="-140" width="62" height="160"/></clipPath><filter id="d1" x="-10%" y="-10%" width="120%" height="120%"><feGaussianBlur stdDeviation="1"/></filter>
<filter id="d05"><feGaussianBlur stdDeviation=".5"/></filter>
<filter id="d3" x="-20%" y="-20%" width="140%" height="140%"><feGaussianBlur stdDeviation="3"/></filter>
<filter id="d8" x="-20%" y="-20%" width="140%" height="140%"><feGaussianBlur stdDeviation="9"/></filter>
</defs>
<rect width="472" height="263" fill="url(#p3w)"/>
<g filter="url(#d8)" opacity=".35"><ellipse cx="130" cy="36" rx="110" ry="20" fill="#a9aeaf"/><ellipse cx="60" cy="215" rx="70" ry="30" fill="#a1a7a9"/><ellipse cx="395" cy="200" rx="26" ry="60" fill="#9199a0"/></g>
<path d="M388 0H472V263H469Z" fill="url(#p3r)"/>
<path d="M388 0L469 263" stroke="#c9cdd1" stroke-width="3" filter="url(#d1)"/>
<!-- glow -->
<g filter="url(#d3)" stroke="#fff6f2" fill="none" stroke-linecap="round"><path d="M0 162H236" stroke-width="9"/></g>
<g filter="url(#d3)" fill="#fff6f2" font-family="Liberation Sans,sans-serif" font-size="139" opacity=".9"><text transform="translate(60 203) skewX(-13.500) scale(1.280 1)" x="0" y="0">P</text><text clip-path="url(#p3yc)" transform="translate(214 202) skewX(-6)" x="0" y="0">Y</text></g>
<!-- sign letters -->
<g filter="url(#d05)" fill="#1b1719" stroke="#adb2b4" stroke-width="3.600" font-family="Liberation Sans,sans-serif" font-size="139"><text transform="translate(54.500 196.500) skewX(-13.500) scale(1.280 1)" x="0" y="0">P</text><text clip-path="url(#p3yc)" transform="translate(206 196.500) skewX(-6)" x="0" y="0">Y</text></g>
<g filter="url(#d05)" fill="none" stroke="#1b1719" stroke-linejoin="round">
<path d="M0 151H243" stroke-width="9.500"/>
<path d="M1 94L-2 114" stroke-width="9"/>
</g>
<g filter="url(#d05)" stroke="#d8d4d4" stroke-width=".9" fill="none" opacity=".55"><path d="M4 148.500H236"/></g>
<!-- person -->
<g filter="url(#d1)">
<path d="M168 263C186 250 210 245 230 243L330 238C352 240 384 250 410 263Z" fill="#1c2a3e"/>
<!-- ears -->
<path d="M236 184C240 182 243 186 243 198C241 202 238 200 236 194Z" fill="#b98d72"/><path d="M345 186C350 184 352 190 350 200C348 206 345 204 344 200Z" fill="#b98d72"/>
<!-- head skin -->
<path d="M242 160C244 138 262 126 298 126C328 128 346 140 346 164C349 172 349 188 345 196C342 222 326 246 300 250C270 250 246 224 243 196C239 188 239 172 242 160Z" fill="#c59a80"/>
<path d="M262 146C274 132 312 130 332 144C328 160 310 164 292 162C276 162 266 156 262 146Z" fill="#dbb69d" opacity=".85"/>
<!-- hair -->
<path d="M241 172C238 150 242 132 256 118C268 106 284 101 300 101C324 103 340 120 346 140C351 156 350 172 346 186C344 170 340 156 330 140C320 130 300 127 282 128C266 130 254 142 248 152C244 160 243 166 241 172Z" fill="#1b191a"/>
<!-- beard -->
<path d="M241 198C242 214 246 228 254 240L262 222C268 214 278 210 290 209C302 209 312 212 320 218C328 214 338 208 346 196C348 220 342 246 330 263H262C250 250 242 224 241 198Z" fill="#241c1b"/>
<path d="M284 186C280 198 276 206 280 211C288 215 298 214 303 209C300 200 296 192 294 186Z" fill="#b88a6e"/>
<path d="M268 214C280 207 306 207 320 215C310 224 280 224 268 214Z" fill="#2b201d"/>
<!-- hand -->
<path d="M224 263C226 246 232 232 242 226C250 218 262 214 274 218C284 220 294 224 300 227C308 228 314 226 318 220C324 212 332 207 338 209C342 214 336 226 326 238C322 248 322 256 320 263Z" fill="#c99f84"/>
<path d="M238 248C252 238 272 236 292 242M232 262C244 254 262 252 282 256" fill="none" stroke="#a67d64" stroke-width="1.500" opacity=".7"/>
<path d="M300 228C308 232 316 230 322 222" fill="none" stroke="#a67d64" stroke-width="1.200" opacity=".7"/>
</g>
<!-- glasses -->
<g filter="url(#d05)" fill="none" stroke="#17110f" stroke-width="2.600">
<path d="M241 175C256 173 274 173 286 176L283 197C274 204 254 204 246 198Z" fill="#8a6a58" fill-opacity=".3"/>
<path d="M298 176C312 174 330 175 342 178L338 200C328 206 310 206 302 200Z" fill="#8a6a58" fill-opacity=".3"/>
<path d="M286 178C290 176 294 176 298 178" stroke-width="3"/>
<path d="M241 175.500H286M298 176.500H342" stroke-width="3.400"/>
<path d="M257 184C262 181 270 181 275 185C270 188 262 188 257 184ZM309 185C314 182 323 182 328 186C322 189 314 189 309 185Z" fill="#2e211c" stroke="none" opacity=".85"/>
</g>
</svg><div class="np" style="left:12px;top:214.67px;width:210.90px"><span class="sx" style="left:7.76px;font-size:17.5px;font-weight:400;transform:scaleX(1.0009);top:10.75px">Gustavo Simões</span><svg style="left:145.00px;top:8px" width="22" height="20"><use href="#pplQ"/></svg><svg style="left:180.30px;top:8px" width="20" height="20"><use href="#micoff"/></svg></div></div>
</body></html>
